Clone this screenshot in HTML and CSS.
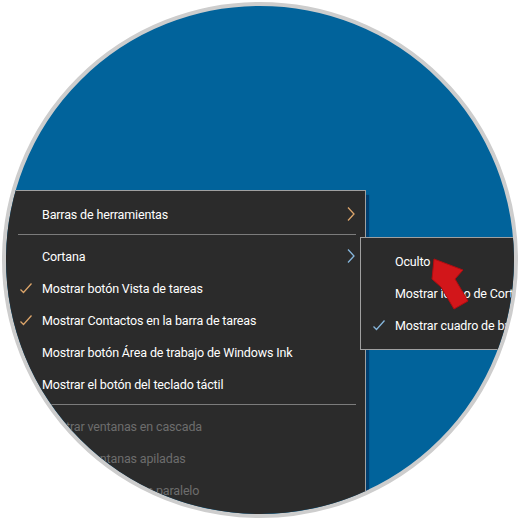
FILE: index.html
```html
<!DOCTYPE html>
<html lang="es">
<head>
  <meta charset="UTF-8">
  <title>Cortana - menú de la barra de tareas</title>
  <link rel="stylesheet" href="styles.css">
</head>
<body>
  <div class="lens">
    <div class="desktop">
      <div class="menu main-menu">
        <div class="item">
          <span class="check"></span>
          <span class="label">Barras de herramientas</span>
          <svg class="chevron warm" viewBox="0 0 8 14"><path d="M1 0.5 L7 7 L1 13.5"/></svg>
        </div>
        <div class="sep"></div>
        <div class="item">
          <span class="check"></span>
          <span class="label">Cortana</span>
          <svg class="chevron cool" viewBox="0 0 8 14"><path d="M1 0.5 L7 7 L1 13.5"/></svg>
        </div>
        <div class="item">
          <svg class="check warm" viewBox="0 0 12 11"><path d="M0.5 6.5 L3.5 9.5 L11.5 0.5"/></svg>
          <span class="label">Mostrar botón Vista de tareas</span>
        </div>
        <div class="item">
          <svg class="check warm" viewBox="0 0 12 11"><path d="M0.5 6.5 L3.5 9.5 L11.5 0.5"/></svg>
          <span class="label">Mostrar Contactos en la barra de tareas</span>
        </div>
        <div class="item">
          <span class="check"></span>
          <span class="label">Mostrar botón Área de trabajo de Windows Ink</span>
        </div>
        <div class="item">
          <span class="check"></span>
          <span class="label">Mostrar el botón del teclado táctil</span>
        </div>
        <div class="sep"></div>
        <div class="item disabled">
          <span class="check"></span>
          <span class="label">Mostrar ventanas en cascada</span>
        </div>
        <div class="item disabled">
          <span class="check"></span>
          <span class="label">Mostrar ventanas apiladas</span>
        </div>
        <div class="item disabled">
          <span class="check"></span>
          <span class="label">Mostrar ventanas en paralelo</span>
        </div>
      </div>

      <div class="menu sub-menu">
        <div class="item">
          <span class="check"></span>
          <span class="label">Oculto</span>
        </div>
        <div class="item">
          <span class="check"></span>
          <span class="label">Mostrar icono de Cortana</span>
        </div>
        <div class="item">
          <svg class="check cool" viewBox="0 0 12 11"><path d="M0.5 6.5 L3.5 9.5 L11.5 0.5"/></svg>
          <span class="label">Mostrar cuadro de búsqueda</span>
        </div>
      </div>

      <svg class="pointer" viewBox="0 0 52 66">
        <polygon points="14,12 43,23 35,32 48,54 34,62 21,40 12,32"/>
      </svg>
    </div>
  </div>
</body>
</html>
```

FILE: styles.css
```css
html, body {
  margin: 0;
  padding: 0;
  background: #ffffff;
}

body {
  width: 520px;
  height: 520px;
  overflow: hidden;
  font-family: Roboto, "Noto Sans", sans-serif;
}

.lens {
  margin: 2px 0 0 2px;
  width: 508px;
  height: 508px;
  border: 4px solid #cdcdcd;
  border-radius: 50%;
  overflow: hidden;
  background: #01639b;
}

.desktop {
  position: relative;
  width: 100%;
  height: 100%;
}

.menu {
  position: absolute;
  box-sizing: border-box;
  background: #2b2b2b;
  border: 1px solid #a0a0a0;
  color: #ffffff;
  font-size: 12.5px;
  letter-spacing: -0.15px;
  display: flex;
  flex-direction: column;
}

.main-menu {
  left: -7px;
  top: 184px;
  width: 367px;
  height: 400px;
  padding: 7px 0;
  box-shadow: 3px 5px 1px rgba(0, 20, 60, 0.45);
}

.sub-menu {
  left: 354px;
  top: 231px;
  width: 220px;
  padding: 7px 0 8px;
}

.item {
  display: flex;
  align-items: center;
  height: 32px;
  padding: 0 10px 0 20px;
  white-space: nowrap;
}

.sub-menu .item {
  padding-left: 12px;
}

.item.disabled {
  color: #6d6d6d;
}

.check {
  width: 12px;
  height: 11px;
  margin-right: 10px;
  flex: none;
}

svg.check path,
.chevron path {
  fill: none;
  stroke-width: 1.3;
}

.warm path { stroke: #dba46a; }
.cool path { stroke: #86b6dc; }

.chevron {
  width: 8px;
  height: 14px;
  margin-left: auto;
}

.sep {
  height: 1px;
  margin: 4px 9px 5px 18px;
  background: #7c7c7c;
}

.pointer {
  position: absolute;
  left: 414px;
  top: 241px;
  width: 52px;
  height: 66px;
}

.pointer polygon {
  fill: #d2161a;
  stroke: #b00c10;
  stroke-width: 1;
}
```
